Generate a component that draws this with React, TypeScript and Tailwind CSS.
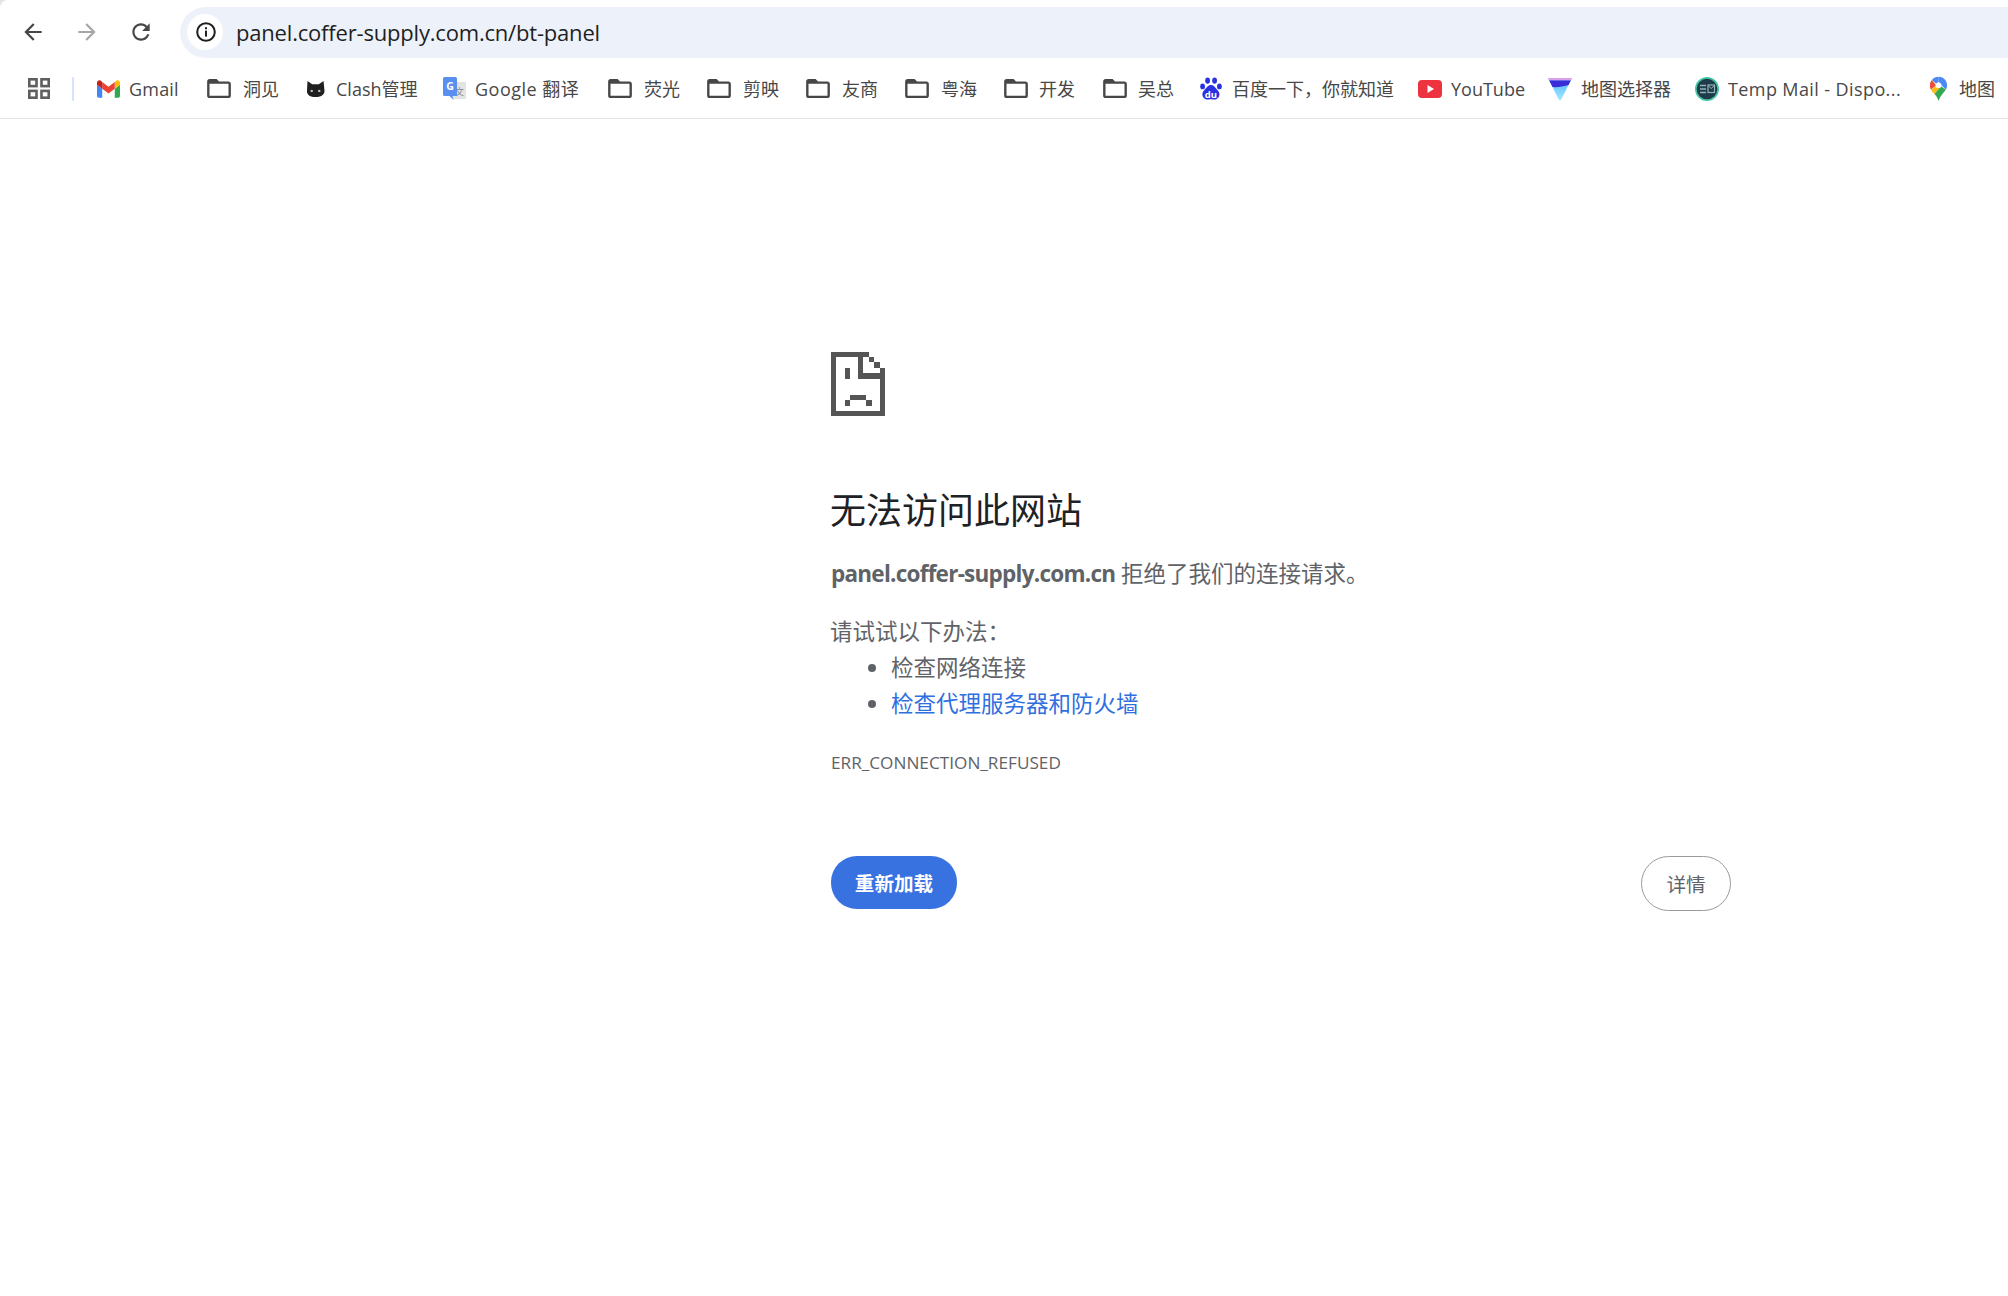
import React from "react";

const uiFont = "font-['Open_Sans','Noto_Sans_CJK_SC',sans-serif]";

function Back() {
  return (
    <svg viewBox="0 0 24 24" className="w-[26px] h-[26px]" fill="#474747">
      <path d="M20 11H7.83l5.59-5.59L12 4l-8 8 8 8 1.41-1.41L7.83 13H20v-2z" />
    </svg>
  );
}
function Forward() {
  return (
    <svg viewBox="0 0 24 24" className="w-[26px] h-[26px]" fill="#a6a6a6">
      <path d="M4 11h12.17l-5.59-5.59L12 4l8 8-8 8-1.41-1.41L16.17 13H4v-2z" />
    </svg>
  );
}
function Reload() {
  return (
    <svg viewBox="0 0 24 24" className="w-[26px] h-[26px]" fill="#474747">
      <path d="M17.65 6.35C16.2 4.9 14.21 4 12 4c-4.42 0-7.99 3.58-7.99 8s3.57 8 7.99 8c3.73 0 6.84-2.55 7.73-6h-2.08c-.82 2.33-3.04 4-5.65 4-3.31 0-6-2.69-6-6s2.69-6 6-6c1.66 0 3.14.69 4.22 1.78L13 11h7V4l-2.35 2.35z" />
    </svg>
  );
}
function Info() {
  return (
    <svg viewBox="0 0 20 20" className="ml-[1px] w-[20px] h-[20px]" fill="none">
      <circle cx="10" cy="10" r="8.8" stroke="#1f1f1f" strokeWidth="2" />
      <rect x="9" y="8.6" width="2" height="6" fill="#1f1f1f" />
      <rect x="9" y="5.2" width="2" height="2" fill="#1f1f1f" />
    </svg>
  );
}
function Apps() {
  return (
    <svg viewBox="0 0 22 21" className="w-[22px] h-[21px] shrink-0" fill="none" stroke="#5f5f5f" strokeWidth="2.6">
      <rect x="1.3" y="1.3" width="7.2" height="6.8" />
      <rect x="13.5" y="1.3" width="7.2" height="6.8" />
      <rect x="1.3" y="12.9" width="7.2" height="6.8" />
      <rect x="13.5" y="12.9" width="7.2" height="6.8" />
    </svg>
  );
}
function Gmail() {
  return (
    <svg viewBox="52 42 88 66" className="w-[23px] h-[18px]">
      <path fill="#4285f4" d="M58 108h14V74L52 59v43c0 3.32 2.69 6 6 6" />
      <path fill="#34a853" d="M120 108h14c3.32 0 6-2.69 6-6V59l-20 15" />
      <path fill="#fbbc04" d="M120 48v26l20-15v-8c0-7.42-8.47-11.65-14.4-7.2" />
      <path fill="#ea4335" d="M72 74V48l24 18 24-18v26L96 92" />
      <path fill="#c5221f" d="M52 51v8l20 15V48l-5.6-4.2c-5.94-4.45-14.4-.22-14.4 7.2" />
    </svg>
  );
}
function Folder() {
  return (
    <svg viewBox="2 4 20 16" className="w-[24px] h-[19px]" fill="#474747">
      <path d="M20 6h-8l-2-2H4c-1.1 0-1.99.9-1.99 2L2 18c0 1.1.9 2 2 2h16c1.1 0 2-.9 2-2V8c0-1.1-.9-2-2-2zm0 12H4V8h16v10z" />
    </svg>
  );
}
function Cat() {
  return (
    <svg viewBox="0 0 20 17" className="w-[19px] h-[16px]">
      <path fill="#202020" d="M1.500 0l5 3.500h7l5-3.500 1 9.500c.5 4.500-2.500 7.500-9.500 7.500S.5 14 1 9.500z" />
      <circle cx="6" cy="10.500" r="1.300" fill="#bdbdbd" />
      <circle cx="14" cy="10.500" r="1.300" fill="#bdbdbd" />
    </svg>
  );
}
function Translate() {
  return (
    <svg viewBox="0 0 23 24" className="w-[23px] h-[24px]">
      <rect x="10" y="5" width="13" height="17" rx="1" fill="#e3e3e3" />
      <text x="16.500" y="18" fontSize="9" fill="#8a8a8a" fontFamily="'Noto Sans CJK SC',sans-serif" textAnchor="middle">文</text>
      <path d="M1.500 0h11a1.500 1.500 0 0 1 1.500 1.500V19H9.500l1 4-4-4h-5A1.500 1.500 0 0 1 0 17.500v-16A1.500 1.500 0 0 1 1.500 0z" fill="#5a8fef" />
      <text x="7" y="13" fontSize="10.500" fontWeight="700" fill="#fff" fontFamily="'Open Sans',sans-serif" textAnchor="middle">G</text>
    </svg>
  );
}
function Baidu() {
  return (
    <svg viewBox="0 0 22 24" className="w-[22px] h-[24px]">
      <g fill="#2932e1">
        <ellipse cx="7.6" cy="3.6" rx="2.4" ry="3.2" />
        <ellipse cx="14.6" cy="3.6" rx="2.4" ry="3.2" />
        <ellipse cx="2.6" cy="9.4" rx="2.4" ry="2.9" />
        <ellipse cx="19.4" cy="9.4" rx="2.4" ry="2.9" />
        <path d="M11 8c3 0 4 2.6 6 4.500 2.400 2.300 3 4.500 2 7-1 2.400-3.500 3.400-6 3-1.400-.3-2.800-.3-4.200 0-2.500.4-5-.6-6-3-1-2.500-.4-4.700 2-7C6.800 10.600 8 8 11 8z" />
      </g>
      <text x="11" y="20.500" fontSize="9.500" fontWeight="700" fill="#fff" fontFamily="'Open Sans',sans-serif" textAnchor="middle">du</text>
    </svg>
  );
}
function YouTube() {
  return (
    <svg viewBox="0 0 24 18" className="w-[24px] h-[18px]">
      <rect width="24" height="18" rx="4" fill="#ee3340" />
      <path d="M9.500 5l6.500 4-6.500 4z" fill="#fff" />
    </svg>
  );
}
function Selector() {
  return (
    <svg viewBox="0 0 24 22" className="w-[24px] h-[22px]">
      <defs>
        <linearGradient id="selb" x1="0" y1="0" x2="0" y2="1">
          <stop offset="0" stopColor="#4db4ff" />
          <stop offset="1" stopColor="#a2e8fb" />
        </linearGradient>
      </defs>
      <path d="M0 0h24L13 22h-2z" fill="url(#selb)" />
      <path d="M0 0h24l-1.200 2.500H1.200z" fill="#d7a0e8" />
      <path d="M1.200 2.500h21.600L20.500 7C16 8.500 9 9.500 4.500 9z" fill="#3a2ad8" />
    </svg>
  );
}
function TempMail() {
  return (
    <svg viewBox="0 0 24 24" className="w-[24px] h-[24px]">
      <circle cx="12" cy="12" r="12" fill="#46c6a4" />
      <circle cx="12" cy="12" r="10.300" fill="#1f3a48" />
      <path d="M5 8.500h6M5 12h6M5 15.500h6" stroke="#8fb5b8" strokeWidth="1.300" />
      <rect x="13" y="8" width="6.500" height="7.500" fill="none" stroke="#8fb5b8" strokeWidth="1.200" />
      <path d="M13 8.500l3.200 3 3.300-3" fill="none" stroke="#8fb5b8" strokeWidth="1" />
    </svg>
  );
}
function Maps() {
  return (
    <svg viewBox="0 0 18 26" className="w-[17px] h-[26px]">
      <path d="M9 0a9 9 0 0 1 7.700 13.700L9 5.500z" fill="#4a8af4" />
      <path d="M9 0a9 9 0 0 0-7 3.400L7 8a3 3 0 0 1 2-2.500z" fill="#4a8af4" />
      <path d="M2 3.400A9 9 0 0 0 1 13.400l5.600-4z" fill="#e94f3a" />
      <path d="M1 13.400c1 2 2.400 3.400 3.800 5l6.800-8a3 3 0 0 1-5-.5z" fill="#f9bd13" />
      <path d="M4.800 18.400c1.800 2 3.400 4 4.200 7.600.8-3.600 3-6.400 7.700-12.300l-5-3.700z" fill="#35a853" />
      <circle cx="9" cy="9" r="3" fill="#fff" />
    </svg>
  );
}

const bookmarks: { icon: React.ReactNode; label: string; item: string; off: string; extra?: string }[] = [
  { icon: <Gmail />, label: "Gmail", item: "w-[110px]", off: "w-[32px]", extra: "tracking-[0.2px]" },
  { icon: <Folder />, label: "洞见", item: "w-[99px]", off: "w-[36px]" },
  { icon: <Cat />, label: "Clash管理", item: "w-[137px]", off: "w-[30px]" },
  { icon: <Translate />, label: "Google 翻译", item: "w-[165px]", off: "w-[32px]", extra: "tracking-[0.5px]" },
  { icon: <Folder />, label: "荧光", item: "w-[99px]", off: "w-[36px]" },
  { icon: <Folder />, label: "剪映", item: "w-[99px]", off: "w-[36px]" },
  { icon: <Folder />, label: "友商", item: "w-[99px]", off: "w-[36px]" },
  { icon: <Folder />, label: "粤海", item: "w-[99px]", off: "w-[36px]" },
  { icon: <Folder />, label: "开发", item: "w-[99px]", off: "w-[35px]" },
  { icon: <Folder />, label: "吴总", item: "w-[97px]", off: "w-[35px]" },
  { icon: <Baidu />, label: "百度一下，你就知道", item: "w-[218px]", off: "w-[32px]" },
  { icon: <YouTube />, label: "YouTube", item: "w-[130px]", off: "w-[33px]" },
  { icon: <Selector />, label: "地图选择器", item: "w-[147px]", off: "w-[33px]" },
  { icon: <TempMail />, label: "Temp Mail - Dispo...", item: "w-[231px]", off: "w-[33px]", extra: "tracking-[0.4px]" },
  { icon: <Maps />, label: "地图", item: "w-[70px]", off: "w-[33px] pl-[4px]" },
];

function SadFile() {
  return (
    <svg viewBox="0 0 10 12" className="w-[54px] h-[66px]" fill="#555555" shapeRendering="crispEdges">
      <rect x="0" y="0" width="1" height="12" />
      <rect x="0" y="0" width="7" height="1" />
      <rect x="0" y="11" width="10" height="1" />
      <rect x="9" y="3" width="1" height="9" />
      <rect x="5" y="0" width="1" height="5" />
      <rect x="5" y="4" width="5" height="1" />
      <rect x="7" y="1" width="1" height="1" />
      <rect x="8" y="2" width="1" height="1" />
      <rect x="2.5" y="3" width="1" height="2" />
      <rect x="3.5" y="8" width="3" height="1" />
      <rect x="2.5" y="9" width="1" height="1" />
      <rect x="6.500" y="9" width="1" height="1" />
    </svg>
  );
}

export default function App() {
  return (
    <div className="w-[2008px] overflow-hidden bg-[#e4e4e4]">
      <div className={`min-h-[1296px] rounded-tl-[8px] bg-white ${uiFont}`}>
        <div className="flex h-[59px] items-start pt-[6.5px]">
          <div className="flex h-[51px] w-[180px] shrink-0 items-center pl-[20px]">
            <Back />
            <div className="ml-[28px]"><Forward /></div>
            <div className="ml-[28px]"><Reload /></div>
          </div>
          <div className="flex h-[51px] flex-1 items-center rounded-l-full bg-[#edf2fa] pl-[7px]">
            <div className="flex h-[36px] w-[36px] items-center justify-center rounded-full bg-white">
              <Info />
            </div>
            <span className="ml-[13px] mt-[1px] text-[22px] tracking-[-0.19px] text-[#1f1f1f]">panel.coffer-supply.com.cn/bt-panel</span>
          </div>
        </div>
        <div className="flex h-[60px] items-center border-b border-[#e3e3e3] pl-[28px]">
          <Apps />
          <div className="ml-[22px] mr-[23px] h-[24px] w-[2px] shrink-0 rounded-full bg-[#d3e3fd]" />
          {bookmarks.map((b, i) => (
            <div key={i} className={`flex shrink-0 items-center ${b.item}`}>
              <div className={`flex shrink-0 items-center ${b.off}`}>{b.icon}</div>
              <span className={`mt-[1px] whitespace-nowrap text-[18px] text-[#474747] ${b.extra ?? ""}`}>{b.label}</span>
            </div>
          ))}
        </div>
        <main className="ml-[831px] w-[900px] pt-[232px]">
          <SadFile />
          <h1 className="mt-[69px] -ml-[1px] text-[36px] font-normal leading-[50px] text-[#202124]">无法访问此网站</h1>
          <p className="mt-[20px] text-[22.5px] leading-[36px] text-[#5f6368]">
            <strong className="font-bold tracking-[-0.75px]">panel.coffer-supply.com.cn</strong> 拒绝了我们的连接请求。
          </p>
          <p className="mt-[22px] -ml-[1px] text-[22.5px] leading-[36px] text-[#5f6368]">请试试以下办法：</p>
          <ul className="list-disc pl-[60px] text-[22.5px] leading-[36px] text-[#5f6368]">
            <li>检查网络连接</li>
            <li><a className="text-[#2f6fe0]">检查代理服务器和防火墙</a></li>
          </ul>
          <div className="mt-[28px] text-[17.2px] leading-[26px] text-[#5f6368]">ERR_CONNECTION_REFUSED</div>
          <div className="mt-[80px] flex items-start justify-between">
            <button className="h-[53px] w-[126px] rounded-[26px] bg-[#3871e0] pt-[2px] text-[19.6px] font-semibold text-white">重新加载</button>
            <button className="h-[55px] w-[90px] rounded-full border border-[#9a9a9a] bg-white pt-[2px] text-[19.6px] text-[#5f6368]">详情</button>
          </div>
        </main>
      </div>
    </div>
  );
}
